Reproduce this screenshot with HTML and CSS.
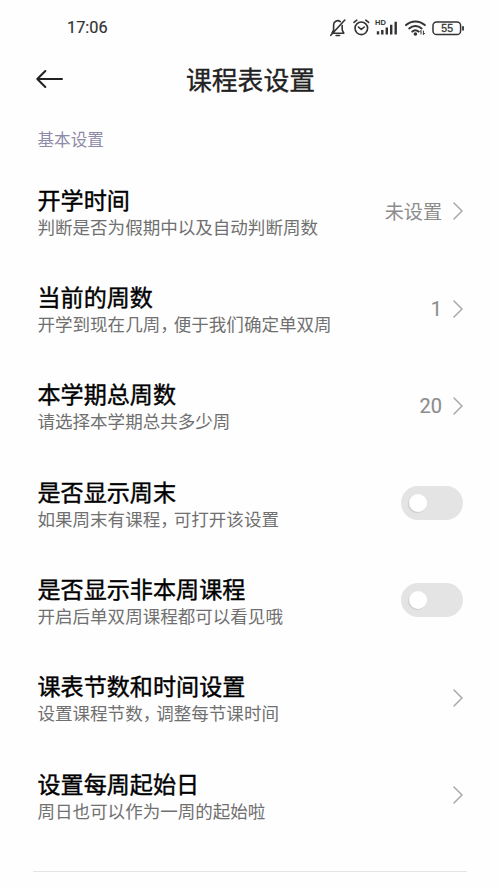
FILE: index.html
```html
<!DOCTYPE html>
<html lang="zh-CN">
<head>
<meta charset="utf-8">
<title>课程表设置</title>
<link rel="stylesheet" href="styles.css">
</head>
<body>
<div class="status">
  <time class="clock">17:06</time>
  <svg class="status-icons" width="138" height="24" viewBox="0 0 138 24" fill="none" stroke="#333" stroke-width="1.6" stroke-linecap="round" stroke-linejoin="round">
    <path d="M3 17.2h11.8l-1.6-3V9.5M11.3 5.6C8.2 3.3 4.6 5.8 4.6 9v5.2L3 17.2M7.1 19.5h3.5M15.8 4 1.8 19.3"/>
    <circle cx="32.3" cy="12.3" r="6.3"/>
    <path d="m29.4 11 2.9 2.4 3-2.4M25 6.4l2.8-2.2M39.6 6.4l-2.8-2.2"/>
    <text class="hd" x="46" y="9">HD</text>
    <path stroke-width="2.4" stroke-linecap="butt" d="M49 18.5v-3.3M53.3 18.5v-4.6M57.8 18.5v-6.9M62.2 18.5V8.8M66.7 18.5V5.7"/>
    <path stroke-width="2" d="M77 9.1c5.4-4.9 13.4-4.9 18.8 0M80.2 12.4c3.6-3.2 8.8-3.2 12.4 0M83.3 15.6c1.9-1.6 4.4-1.6 6.2 0"/>
    <circle cx="86.4" cy="18" r="1" fill="#333"/>
    <path stroke-width="1" d="M92 18v-3.6l-1.2 1.2M94.4 15v3.6l1.2-1.2"/>
    <rect x="104" y="6" width="27.6" height="12.6" rx="3.6" stroke-width="1.5"/>
    <path stroke-width="1.8" d="M134 10.8v3"/>
    <text class="battery" x="112.3" y="16">55</text>
  </svg>
</div>
<header class="topbar">
  <svg class="back" width="28" height="20" viewBox="0 0 28 20" fill="none" stroke="#222" stroke-width="2" stroke-linecap="round" stroke-linejoin="round"><path d="M26 10H1.5M9.3 2 1.3 10l8 8"/></svg>
  <h1>课程表设置</h1>
</header>
<h2 class="section">基本设置</h2>
<main class="list">
  <div class="row">
    <div class="info"><div class="title">开学时间</div><div class="desc">判断是否为假期中以及自动判断周数</div></div>
    <span class="value">未设置</span>
    <svg class="chevron" viewBox="0 0 12 20"><path d="m2 2 8 8-8 8"/></svg>
  </div>
  <div class="row">
    <div class="info"><div class="title">当前的周数</div><div class="desc">开学到现在几周<span class="comma">，</span>便于我们确定单双周</div></div>
    <span class="value number">1</span>
    <svg class="chevron" viewBox="0 0 12 20"><path d="m2 2 8 8-8 8"/></svg>
  </div>
  <div class="row">
    <div class="info"><div class="title">本学期总周数</div><div class="desc">请选择本学期总共多少周</div></div>
    <span class="value number">20</span>
    <svg class="chevron" viewBox="0 0 12 20"><path d="m2 2 8 8-8 8"/></svg>
  </div>
  <div class="row">
    <div class="info"><div class="title">是否显示周末</div><div class="desc">如果周末有课程<span class="comma">，</span>可打开该设置</div></div>
    <span class="switch"></span>
  </div>
  <div class="row">
    <div class="info"><div class="title">是否显示非本周课程</div><div class="desc">开启后单双周课程都可以看见哦</div></div>
    <span class="switch"></span>
  </div>
  <div class="row">
    <div class="info"><div class="title">课表节数和时间设置</div><div class="desc">设置课程节数<span class="comma">，</span>调整每节课时间</div></div>
    <svg class="chevron" viewBox="0 0 12 20"><path d="m2 2 8 8-8 8"/></svg>
  </div>
  <div class="row">
    <div class="info"><div class="title">设置每周起始日</div><div class="desc">周日也可以作为一周的起始啦</div></div>
    <svg class="chevron" viewBox="0 0 12 20"><path d="m2 2 8 8-8 8"/></svg>
  </div>
</main>
<hr class="divider">
</body>
</html>
```
FILE: styles.css
```css
* { box-sizing: border-box; }
body {
  margin: 0;
  height: 888px;
  overflow: hidden;
  background: #fefefe;
  font-family: "Noto Sans CJK SC", sans-serif;
}
.status {
  display: flex;
  justify-content: space-between;
  align-items: center;
  height: 56px;
  padding: 0 33px 0 67px;
}
.clock {
  font: 400 16.3px/20px Roboto, sans-serif;
  color: #333;
  -webkit-text-stroke: 0.2px #333;
}
.hd { font: 700 7.5px "Liberation Sans", sans-serif; fill: #333; stroke: none; }
.battery { font: 400 10.5px "Liberation Sans", sans-serif; fill: #333; stroke: #333; stroke-width: 0.3px; }
.topbar {
  display: grid;
  grid-template-columns: 65px 1fr 64px;
  align-items: center;
  height: 46px;
}
.back { margin-left: 36px; }
h1 {
  margin: 0;
  text-align: center;
  font-size: 25.8px;
  line-height: 36px;
  font-weight: 400;
  color: #222;
  -webkit-text-stroke: 0.35px #222;
}
.section {
  margin: 25px 0 0 37.5px;
  font-size: 16.6px;
  line-height: 24px;
  font-weight: 400;
  color: #8d8ba8;
}
.list { padding: 11.6px 36px 0 37.5px; }
.row { display: flex; align-items: center; height: 97.3px; }
.info { flex: 1; padding-top: 2px; }
.title {
  font-size: 23.1px;
  line-height: 29px;
  color: #000;
  -webkit-text-stroke: 0.4px #000;
}
.desc { font-size: 17.55px; line-height: 26px; color: #707070; }
.comma {
  padding-right: 4.8px;
  font-feature-settings: "halt";
}
.value { margin-right: 10px; font-size: 19.1px; line-height: 28px; color: #8c8c8c; }
.number { font-family: Roboto, sans-serif; font-size: 20px; -webkit-text-stroke: 0.15px #8c8c8c; }
.chevron {
  width: 12px;
  height: 20px;
  fill: none;
  stroke: #aaa;
  stroke-width: 1.6;
  stroke-linecap: round;
  stroke-linejoin: round;
}
.switch {
  display: flex;
  align-items: center;
  width: 62px;
  height: 34px;
  margin-right: 1px;
  padding-left: 8px;
  border-radius: 17px;
  background: #e4e4e4;
}
.switch::before {
  content: "";
  width: 18px;
  height: 18px;
  border-radius: 50%;
  background: #fff;
  box-shadow: -1px 1px 1px #ccc;
}
.divider { margin: 27.4px 33px 0; border: 0; border-top: 1px solid #e4e4e4; }
```
